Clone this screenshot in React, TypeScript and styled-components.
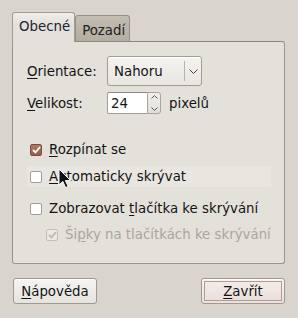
import React from "react";
import styled, { createGlobalStyle } from "styled-components";

const GlobalStyle = createGlobalStyle`
    html, body {
        margin: 0;
        padding: 0;
        background: #d9d5ce;
    }
    body {
        font-family: "DejaVu Sans", "Liberation Sans", sans-serif;
        font-size: 13.33px;
        color: #141414;
    }
`;

const Window = styled.div`
    position: relative;
    width: 298px;
    height: 318px;
    box-sizing: border-box;
    padding: 12px 13px 0 12px;
    background: #d9d5ce;
`;

const TabRow = styled.div`
    display: flex;
    align-items: flex-end;
    height: 29px;
    position: relative;
    z-index: 1;
`;

const Tab = styled.div<{ $active?: boolean }>`
    box-sizing: border-box;
    display: flex;
    align-items: center;
    padding: 0 4px 0 6px;
    border: 1px solid ${({ $active }) => ($active ? "#a39e95" : "#958f85")};
    border-bottom: none;
    border-radius: 3px 3px 0 0;
    height: ${({ $active }) => ($active ? "30px" : "26px")};
    margin-bottom: ${({ $active }) => ($active ? "-1px" : "0")};
    padding-top: ${({ $active }) => ($active ? "0" : "3px")};
    padding-bottom: ${({ $active }) => ($active ? "2px" : "0")};
    background: ${({ $active }) =>
        $active
            ? "linear-gradient(#f0eeea, #e4e0da 40%, #e4e0da)"
            : "linear-gradient(#c3bcb1, #b4ada2)"};
    color: ${({ $active }) => ($active ? "#1b2433" : "#222")};
`;

const Page = styled.div`
    box-sizing: border-box;
    height: 223px;
    border: 1px solid #9a958c;
    border-top-color: #8c877e;
    border-radius: 0 3px 3px 3px;
    background: #e4e0da;
    padding: 14px 13px 0 14px;
`;

const FormGrid = styled.div`
    display: grid;
    grid-template-columns: 80px auto;
    row-gap: 6px;
    align-items: center;
`;

const Label = styled.span``;

const U = styled.span`
    text-decoration: underline;
    text-underline-offset: 2px;
    text-decoration-thickness: 1px;
`;

const Combo = styled.div`
    box-sizing: border-box;
    width: 95px;
    height: 30px;
    display: flex;
    align-items: center;
    border: 1px solid #a29c93;
    border-radius: 3px;
    background: linear-gradient(#f5f3f0, #e9e6e1);
    box-shadow: inset 0 1px 0 #ffffff;
`;

const ComboText = styled.span`
    flex: 1;
    padding-left: 6px;
`;

const ComboSep = styled.div`
    width: 1px;
    height: 20px;
    background: #b7b2aa;
`;

const ComboArrow = styled.div`
    width: 16px;
    display: flex;
    justify-content: center;
    align-items: center;
`;

const SpinRow = styled.div`
    display: flex;
    align-items: center;
    gap: 8px;
`;

const Spin = styled.div`
    display: flex;
    height: 22px;
    box-sizing: border-box;
`;

const SpinEntry = styled.div`
    box-sizing: border-box;
    width: 40px;
    height: 22px;
    background: #ffffff;
    border: 1px solid #a39d94;
    border-top-color: #8d887f;
    border-right: none;
    border-radius: 2px 0 0 2px;
    padding-left: 3px;
    display: flex;
    align-items: center;
`;

const SpinButtons = styled.div`
    box-sizing: border-box;
    width: 14px;
    height: 22px;
    border: 1px solid #aaa49c;
    border-radius: 0 3px 3px 0;
    background: linear-gradient(#f1efec, #e2dfda);
    display: flex;
    flex-direction: column;
    justify-content: space-between;
    align-items: center;
    padding: 2px 0;
`;

const Checks = styled.div`
    margin-top: 25px;
    display: flex;
    flex-direction: column;
`;

const CheckRow = styled.div<{ $gap: number; $indent?: boolean; $hover?: boolean; $disabled?: boolean }>`
    display: flex;
    align-items: center;
    gap: 7px;
    height: 21px;
    margin-top: ${({ $gap }) => $gap}px;
    padding-left: ${({ $indent }) => ($indent ? "19px" : "3px")};
    background: ${({ $hover }) => ($hover ? "#e9e6e1" : "transparent")};
    color: ${({ $disabled }) => ($disabled ? "#aaa69f" : "inherit")};
`;

const Box = styled.div<{ $checked?: boolean; $disabled?: boolean }>`
    box-sizing: border-box;
    flex: none;
    width: 12px;
    height: 12px;
    border-radius: 2px;
    border: 1px solid
        ${({ $checked, $disabled }) => ($disabled ? "#c4c0b9" : $checked ? "#7d4d3e" : "#a29c94")};
    background: ${({ $checked, $disabled }) =>
        $disabled ? "#ebe8e4" : $checked ? "linear-gradient(#b07a66, #935d4a)" : "#ffffff"};
    display: flex;
    align-items: center;
    justify-content: center;
`;

const ButtonRow = styled.div`
    display: flex;
    justify-content: space-between;
    margin-top: 14px;
    padding-left: 1px;
`;

const Button = styled.div`
    box-sizing: border-box;
    width: 84px;
    height: 26px;
    border: 1px solid #9f9991;
    border-radius: 3px;
    background: linear-gradient(#f6f4f1, #e7e4df);
    box-shadow: inset 0 1px 0 #ffffff;
    display: flex;
    padding: 2px;
`;

const ButtonInner = styled.div<{ $focused?: boolean }>`
    flex: 1;
    display: flex;
    align-items: center;
    justify-content: center;
    border: 1px solid ${({ $focused }) => ($focused ? "#b79a8d" : "transparent")};
    background: ${({ $focused }) => ($focused ? "linear-gradient(#f2ebe8, #eae1dd)" : "transparent")};
`;

const Cursor = styled.svg`
    position: absolute;
    left: 58px;
    top: 168px;
    z-index: 5;
`;

const CheckMark = ({ color }: { color: string }) => (
    <svg width="9" height="8" viewBox="0 0 9 8">
        <polyline points="1,4 3.5,6.5 8,1" fill="none" stroke={color} strokeWidth="1.8" />
    </svg>
);

const App = () => {
    return (
        <Window>
            <GlobalStyle />
            <TabRow>
                <Tab $active>Obecné</Tab>
                <Tab>Pozadí</Tab>
            </TabRow>
            <Page>
                <FormGrid>
                    <Label><U>O</U>rientace:</Label>
                    <Combo>
                        <ComboText>Nahoru</ComboText>
                        <ComboSep />
                        <ComboArrow>
                            <svg width="9" height="5" viewBox="0 0 9 5">
                                <polyline points="0.5,0.5 4.5,4.5 8.5,0.5" fill="none" stroke="#444" strokeWidth="1" />
                            </svg>
                        </ComboArrow>
                    </Combo>
                    <Label><U>V</U>elikost:</Label>
                    <SpinRow>
                        <Spin>
                            <SpinEntry>24</SpinEntry>
                            <SpinButtons>
                                <svg width="7" height="4" viewBox="0 0 7 4">
                                    <polyline points="0.5,3.5 3.5,0.5 6.5,3.5" fill="none" stroke="#555" strokeWidth="1" />
                                </svg>
                                <svg width="7" height="4" viewBox="0 0 7 4">
                                    <polyline points="0.5,0.5 3.5,3.5 6.5,0.5" fill="none" stroke="#555" strokeWidth="1" />
                                </svg>
                            </SpinButtons>
                        </Spin>
                        <span>pixelů</span>
                    </SpinRow>
                </FormGrid>
                <Checks>
                    <CheckRow $gap={0}>
                        <Box $checked><CheckMark color="#ffffff" /></Box>
                        <span><U>R</U>ozpínat se</span>
                    </CheckRow>
                    <CheckRow $gap={6} $hover>
                        <Box />
                        <span><U>A</U>utomaticky skrývat</span>
                    </CheckRow>
                    <CheckRow $gap={11}>
                        <Box />
                        <span>Zobrazovat <U>t</U>lačítka ke skrývání</span>
                    </CheckRow>
                    <CheckRow $gap={5} $indent $disabled>
                        <Box $disabled><CheckMark color="#bdb9b2" /></Box>
                        <span>Ši<U>p</U>ky na tlačítkách ke skrývání</span>
                    </CheckRow>
                </Checks>
            </Page>
            <ButtonRow>
                <Button>
                    <ButtonInner><U>N</U>ápověda</ButtonInner>
                </Button>
                <Button>
                    <ButtonInner $focused><U>Z</U>avřít</ButtonInner>
                </Button>
            </ButtonRow>
            <Cursor width="14" height="21" viewBox="0 0 14 21">
                <path d="M1,1 L1,17 L4.8,13.4 L7.6,19.6 L10.2,18.5 L7.4,12.6 L12.6,12.6 Z" fill="#111" stroke="#fff" strokeWidth="1" strokeLinejoin="round" />
            </Cursor>
        </Window>
    );
};

export default App;
